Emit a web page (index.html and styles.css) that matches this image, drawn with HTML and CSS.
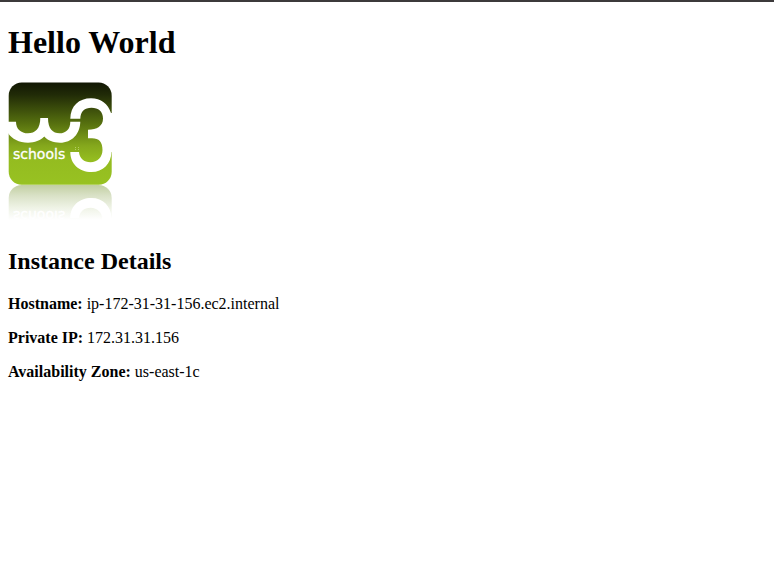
FILE: index.html
```html
<!DOCTYPE html>
<html lang="en">
<head>
<meta charset="utf-8">
<title>Hello World</title>
<link rel="stylesheet" href="styles.css">
</head>
<body>
<h1>Hello World</h1>
<svg class="logo" width="104" height="142" viewBox="0 0 104 142" role="img" aria-label="W3Schools">
  <defs>
    <linearGradient id="green" x1="0" y1="0" x2="0" y2="1">
      <stop offset="0" stop-color="#121704"/>
      <stop offset="0.12" stop-color="#212b07"/>
      <stop offset="0.4" stop-color="#56700f"/>
      <stop offset="0.62" stop-color="#85a81c"/>
      <stop offset="0.75" stop-color="#94bc20"/>
      <stop offset="1" stop-color="#98c222"/>
    </linearGradient>
    <linearGradient id="fade" x1="0" y1="103" x2="0" y2="138" gradientUnits="userSpaceOnUse">
      <stop offset="0" stop-color="#c2cfa2"/>
      <stop offset="0.3" stop-color="#d9e1c6"/>
      <stop offset="0.65" stop-color="#eff3e6"/>
      <stop offset="1" stop-color="#fff"/>
    </linearGradient>
    <clipPath id="mirror"><rect x="0" y="103" width="104" height="39"/></clipPath>
    <g id="mark">
      <path fill="#fff" d="M0 39.7H8C8 47 13 51.3 20 51.3S32.3 47 32.3 36H40C40 47 45 51.3 51.5 51.3S62.3 47 62.3 39.7H72.3C72 52 64 60.7 52 60.7C45 60.7 40 58.5 36.3 54.5C32 58.5 27 60.7 20 60.7C11 60.7 4 57 0 51Z"/>
      <path fill="#fff" d="M62.3 36.7C62.5 24 71 16.3 83 16.3C93 16.3 100 22 103 31H104V70H103.5C103 82 95 90 83.5 90C71 90 62.3 82 62.3 70H71C71.5 76.5 76 80.3 82.5 80.3C89.5 80.3 94.5 75 94.5 68C94.5 60 91 56.3 84 56.3H80V47.7C89 47.7 95 44 95 36.5C95 29.5 90.5 25.7 83.5 25.7C76.5 25.7 72.5 29.5 72.3 36.7Z"/>
      <text class="logo-text" x="5" y="77">schools</text>
    </g>
  </defs>
  <rect x="0.7" y="0.5" width="103" height="102.3" rx="13" fill="url(#green)"/>
  <use href="#mark"/>
  <path fill="#b4cf63" d="M67 65h1v1h-1zM70 65h1v1h-1zM67 67h1v1h-1zM70 67h1v1h-1z"/>
  <g clip-path="url(#mirror)">
    <rect x="0.7" y="103" width="103" height="60" rx="13" fill="url(#fade)"/>
    <use href="#mark" transform="matrix(1 0 0 -1 0 206)"/>
  </g>
</svg>
<h2>Instance Details</h2>
<p><b>Hostname:</b> ip-172-31-31-156.ec2.internal</p>
<p><b>Private IP:</b> 172.31.31.156</p>
<p><b>Availability Zone:</b> us-east-1c</p>
</body>
</html>
```
FILE: styles.css
```css
html {
  border-top: 2px solid #3c3a3b;
}

body {
  margin: 0 8px;
  background: #fff;
  color: #000;
  font: 16px "Liberation Serif", "Times New Roman", serif;
}

h1 {
  margin: 22px 0 21px;
  font-size: 32px;
}

h2 {
  margin: 20px 0;
  font-size: 24px;
}

p {
  margin: 16px 0;
}

.logo-text {
  fill: #fff;
  stroke: #fff;
  stroke-width: 0.3px;
  font: 14px "DejaVu Sans", sans-serif;
}
```
